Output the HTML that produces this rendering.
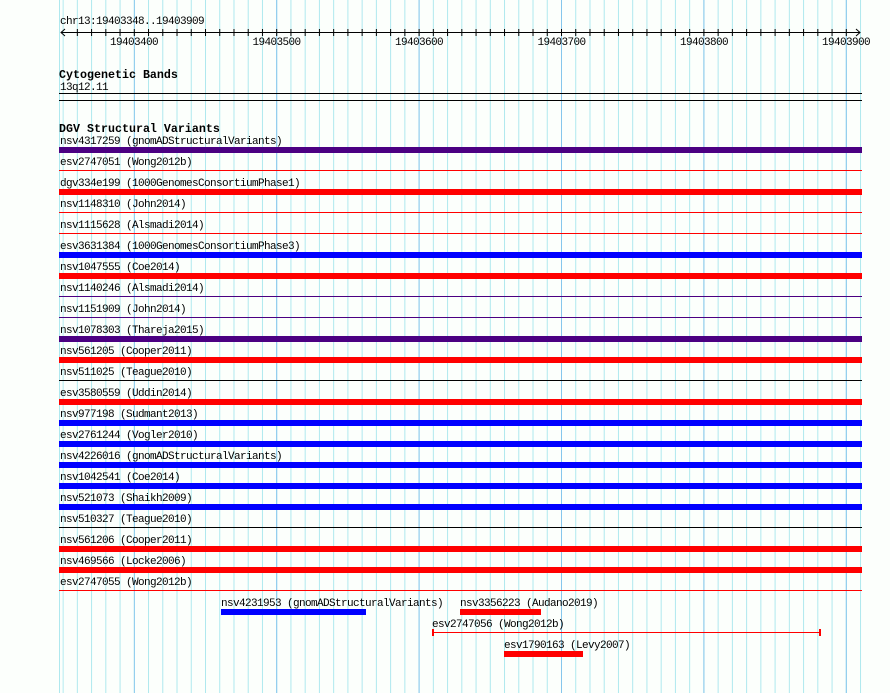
<!DOCTYPE html>
<html><head><meta charset="utf-8">
<style>
html,body{margin:0;padding:0;background:#fcfffc;}
svg{display:block}
text{font-family:"Liberation Mono",monospace;font-size:11px;letter-spacing:-0.6px;fill:#000}
.b{font-weight:bold;font-size:11.67px;letter-spacing:0}
</style></head><body>
<svg width="890" height="693" viewBox="0 0 890 693" xmlns="http://www.w3.org/2000/svg">
<defs>
<pattern id="mi" patternUnits="userSpaceOnUse" x="62.6" y="0" width="14.24" height="693">
<rect x="0" y="0" width="1" height="693" fill="#aee8ee"/>
</pattern>
<pattern id="ma" patternUnits="userSpaceOnUse" x="133.8" y="0" width="142.4" height="693">
<rect x="0" y="0" width="1" height="693" fill="#86c6ec"/>
</pattern>
<pattern id="tk" patternUnits="userSpaceOnUse" x="62.6" y="0" width="14.24" height="693">
<rect x="0" y="29" width="1" height="7" fill="#000"/>
</pattern>
</defs>
<rect x="62.6" y="0" width="800" height="693" fill="url(#mi)"/>
<rect x="59" y="0" width="1" height="693" fill="#aee8ee"/>
<rect x="133.8" y="0" width="720" height="693" fill="url(#ma)"/>

<text x="60" y="24">chr13:19403348..19403909</text>
<rect x="61" y="32" width="799" height="1" fill="#000"/>
<rect x="70" y="0" width="780" height="40" fill="url(#tk)"/>
<path d="M65 29 L61 32.5 L65 36" stroke="#000" fill="none"/>
<path d="M856 29 L860 32.5 L856 36" stroke="#000" fill="none"/>
<text x="134" y="45" text-anchor="middle">19403400</text>
<text x="276.5" y="45" text-anchor="middle">19403500</text>
<text x="419" y="45" text-anchor="middle">19403600</text>
<text x="561.5" y="45" text-anchor="middle">19403700</text>
<text x="704" y="45" text-anchor="middle">19403800</text>
<text x="846" y="45" text-anchor="middle">19403900</text>

<text class="b" x="59" y="78">Cytogenetic Bands</text>
<text x="60" y="90">13q12.11</text>
<rect x="59" y="93" width="803" height="1" fill="#000"/>
<rect x="59" y="100" width="803" height="1" fill="#000"/>

<text class="b" x="59" y="132">DGV Structural Variants</text>

<g>
<text x="60" y="144">nsv4317259 (gnomADStructuralVariants)</text><rect x="59" y="147" width="803" height="6" fill="#4b0082"/>
<text x="60" y="165">esv2747051 (Wong2012b)</text><rect x="59" y="170" width="803" height="1" fill="#f00"/>
<text x="60" y="186">dgv334e199 (1000GenomesConsortiumPhase1)</text><rect x="59" y="189" width="803" height="6" fill="#f00"/>
<text x="60" y="207">nsv1148310 (John2014)</text><rect x="59" y="212" width="803" height="1" fill="#f00"/>
<text x="60" y="228">nsv1115628 (Alsmadi2014)</text><rect x="59" y="233" width="803" height="1" fill="#f00"/>
<text x="60" y="249">esv3631384 (1000GenomesConsortiumPhase3)</text><rect x="59" y="252" width="803" height="6" fill="#00f"/>
<text x="60" y="270">nsv1047555 (Coe2014)</text><rect x="59" y="273" width="803" height="6" fill="#f00"/>
<text x="60" y="291">nsv1140246 (Alsmadi2014)</text><rect x="59" y="296" width="803" height="1" fill="#4b0082"/>
<text x="60" y="312">nsv1151909 (John2014)</text><rect x="59" y="317" width="803" height="1" fill="#4b0082"/>
<text x="60" y="333">nsv1078303 (Thareja2015)</text><rect x="59" y="336" width="803" height="6" fill="#4b0082"/>
<text x="60" y="354">nsv561205 (Cooper2011)</text><rect x="59" y="357" width="803" height="6" fill="#f00"/>
<text x="60" y="375">nsv511025 (Teague2010)</text><rect x="59" y="380" width="803" height="1" fill="#000"/>
<text x="60" y="396">esv3580559 (Uddin2014)</text><rect x="59" y="399" width="803" height="6" fill="#f00"/>
<text x="60" y="417">nsv977198 (Sudmant2013)</text><rect x="59" y="420" width="803" height="6" fill="#00f"/>
<text x="60" y="438">esv2761244 (Vogler2010)</text><rect x="59" y="441" width="803" height="6" fill="#00f"/>
<text x="60" y="459">nsv4226016 (gnomADStructuralVariants)</text><rect x="59" y="462" width="803" height="6" fill="#00f"/>
<text x="60" y="480">nsv1042541 (Coe2014)</text><rect x="59" y="483" width="803" height="6" fill="#00f"/>
<text x="60" y="501">nsv521073 (Shaikh2009)</text><rect x="59" y="504" width="803" height="6" fill="#00f"/>
<text x="60" y="522">nsv510327 (Teague2010)</text><rect x="59" y="527" width="803" height="1" fill="#000"/>
<text x="60" y="543">nsv561206 (Cooper2011)</text><rect x="59" y="546" width="803" height="6" fill="#f00"/>
<text x="60" y="564">nsv469566 (Locke2006)</text><rect x="59" y="567" width="803" height="6" fill="#f00"/>
<text x="60" y="585">esv2747055 (Wong2012b)</text><rect x="59" y="590" width="803" height="1" fill="#f00"/>

<text x="221" y="606">nsv4231953 (gnomADStructuralVariants)</text><rect x="221" y="609" width="145" height="6" fill="#00f"/>
<text x="460" y="606">nsv3356223 (Audano2019)</text><rect x="460" y="609" width="81" height="6" fill="#f00"/>
<text x="432" y="627">esv2747056 (Wong2012b)</text><rect x="432" y="632" width="389" height="1" fill="#f00"/>
<rect x="432" y="629" width="2" height="7" fill="#f00"/><rect x="819" y="629" width="2" height="7" fill="#f00"/>
<text x="504" y="648">esv1790163 (Levy2007)</text><rect x="504" y="651" width="79" height="6" fill="#f00"/>
</g>
</svg>
</body></html>
